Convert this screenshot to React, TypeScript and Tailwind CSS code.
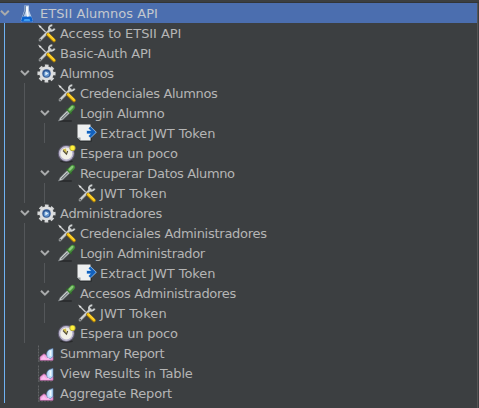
import React from "react";

type Kind = "flask" | "tools" | "gear" | "dropper" | "extract" | "timer" | "chart";
type Node = { label: string; kind: Kind; depth: number; open?: boolean; tracking: string };

const root: Node = { label: "ETSII Alumnos API", kind: "flask", depth: 0, open: true, tracking: "tracking-[0.04px]" };

const nodes: Node[] = [
  { label: "Access to ETSII API", kind: "tools", depth: 1, tracking: "tracking-[-0.07px]" },
  { label: "Basic-Auth API", kind: "tools", depth: 1, tracking: "tracking-[-0.2px]" },
  { label: "Alumnos", kind: "gear", depth: 1, open: true, tracking: "tracking-[-0.4px]" },
  { label: "Credenciales Alumnos", kind: "tools", depth: 2, tracking: "tracking-[-0.34px]" },
  { label: "Login Alumno", kind: "dropper", depth: 2, open: true, tracking: "tracking-[-0.38px]" },
  { label: "Extract JWT Token", kind: "extract", depth: 3, tracking: "tracking-[-0.06px]" },
  { label: "Espera un poco", kind: "timer", depth: 2, tracking: "tracking-[-0.2px]" },
  { label: "Recuperar Datos Alumno", kind: "dropper", depth: 2, open: true, tracking: "tracking-[-0.35px]" },
  { label: "JWT Token", kind: "tools", depth: 3, tracking: "tracking-[0.12px]" },
  { label: "Administradores", kind: "gear", depth: 1, open: true, tracking: "tracking-[-0.28px]" },
  { label: "Credenciales Administradores", kind: "tools", depth: 2, tracking: "tracking-[-0.26px]" },
  { label: "Login Administrador", kind: "dropper", depth: 2, open: true, tracking: "tracking-[-0.32px]" },
  { label: "Extract JWT Token", kind: "extract", depth: 3, tracking: "tracking-[-0.06px]" },
  { label: "Accesos Administradores", kind: "dropper", depth: 2, open: true, tracking: "tracking-[-0.3px]" },
  { label: "JWT Token", kind: "tools", depth: 3, tracking: "tracking-[0.12px]" },
  { label: "Espera un poco", kind: "timer", depth: 2, tracking: "tracking-[-0.2px]" },
  { label: "Summary Report", kind: "chart", depth: 1, tracking: "tracking-[-0.42px]" },
  { label: "View Results in Table", kind: "chart", depth: 1, tracking: "tracking-[-0.14px]" },
  { label: "Aggregate Report", kind: "chart", depth: 1, tracking: "tracking-[-0.19px]" },
];

function Glyph({ kind }: { kind: Kind }) {
  switch (kind) {
    case "flask":
      return (
        <>
          <ellipse cx="10" cy="18.2" rx="6.500" ry="1.100" fill="#30508d" />
          <path d="M7.200 2.500h4.800v5l4 10c.2.800-.2 1.300-1 1.300H4.800c-.8 0-1.200-.5-1-1.300l3.400-10z" fill="#b4cae8" />
          <path d="M5.400 13.500h8.900l1.500 4c.2.700-.1 1.200-.8 1.200H4.900c-.7 0-1-.5-.8-1.200z" fill="#0a62cf" />
          <path d="M7.500 16h5l.8 2H6.500z" fill="#3e9df2" />
          <path d="M8.200 3v5l-2 5.500" fill="none" stroke="#53719f" strokeWidth="1" />
          <path d="M10 3.500v5l1 5" fill="none" stroke="#f4f8fd" strokeWidth="2" />
        </>
      );
    case "tools":
      return (
        <>
          <path d="M2.500 3 10 10.500" stroke="#c3c5c5" strokeWidth="1.400" />
          <path d="M1 1.500 4.500 3.500 3 5z" fill="#e2e2e2" />
          <path d="M3 17 13 7" stroke="#6b6f71" strokeWidth="3.200" strokeLinecap="round" />
          <path d="M3 16.700 13.500 6.200" stroke="#cfd1d1" strokeWidth="2" strokeLinecap="round" />
          <path d="M15.300 2.200c-2.500.1-3.900 1.900-3.100 4.200.9 1.900 4.100 1.800 5.500-.8" fill="none" stroke="#cdd0d1" strokeWidth="2" />
          <circle cx="3.200" cy="16.600" r=".9" fill="#55595b" />
          <path d="m11 11.500 6 6" stroke="#997410" strokeWidth="3.600" strokeLinecap="round" />
          <path d="m11.200 11.300 5.900 5.900" stroke="#f9c713" strokeWidth="2.500" strokeLinecap="round" />
          <path d="m11.700 11 5.300 5.300" stroke="#ffe163" strokeWidth=".7" />
        </>
      );
    case "gear":
      return (
        <>
          <circle cx="9.500" cy="10.500" r="7.800" fill="none" stroke="#d5d6d7" strokeWidth="2.600" strokeDasharray="3.6 2.526" strokeDashoffset="1.8" />
          <circle cx="9.500" cy="10.500" r="7.200" fill="#dedfe0" />
          <circle cx="9.500" cy="10.500" r="4.600" fill="#8e9db8" />
          <circle cx="9.500" cy="10.500" r="3.900" fill="#2e5793" />
          <circle cx="9.500" cy="11" r="2.800" fill="#6b9bd2" />
          <path d="m8.300 8.600 3.200 1.900-3.200 1.900z" fill="#e3f0fa" />
        </>
      );
    case "dropper":
      return (
        <>
          <path d="m3 17.500 9-8M3 18h11" stroke="#2b2d2f" strokeWidth="2" strokeLinecap="round" />
          <path d="m1.500 18 1.800-3.500 7.200-7.300 2.500 2.500-7.300 7z" fill="#d5d9da" stroke="#777d80" strokeWidth=".7" />
          <path d="m4.500 15.800 6.200-6.200" stroke="#697173" strokeWidth="1.200" />
          <path d="m10 6.200 4.200 4.200" stroke="#315d2c" strokeWidth="2" strokeLinecap="round" />
          <path d="m12.800 7.200 2.900-2.900" stroke="#448f3a" strokeWidth="4.800" strokeLinecap="round" />
          <path d="m12.700 6.600 2.700-2.700" stroke="#8bc979" strokeWidth="2.300" strokeLinecap="round" />
        </>
      );
    case "extract":
      return (
        <>
          <path d="M2.500 18.200h12V14" fill="none" stroke="#292c2e" />
          <path d="M.5 1.500h13v16H3.500L.5 14.500z" fill="#eef0f0" />
          <path d="M.5 14.500h3v3z" fill="#9ba0a3" />
          <path d="M9.500 9.200h7.500M12.500 4.300 17.500 9.200l-5 5" fill="none" stroke="#9cc8f2" strokeWidth="3.200" />
          <path d="M10 9.200h7M12.500 4.500 17.200 9.200l-4.700 4.700" fill="none" stroke="#1261bd" strokeWidth="2.400" />
        </>
      );
    case "timer":
      return (
        <>
          <ellipse cx="9.500" cy="18.300" rx="6.500" ry="1.200" fill="#28292b" />
          <circle cx="9.300" cy="10.500" r="7.700" fill="#f1efe6" stroke="#5f5b70" strokeWidth="1.600" />
          <circle cx="9.300" cy="10.500" r="6.700" fill="none" stroke="#bbb5ce" strokeWidth="1.500" />
          <path d="M5.500 6.500 9 5.500l1 5.500z" fill="#d2bd4a" />
          <path d="m6 7.500 3.500 3.700 1.200-3.200" fill="none" stroke="#554e38" strokeWidth="1.100" />
          <circle cx="15.500" cy="5" r="3.100" fill="#b8ad38" />
          <circle cx="15.500" cy="5" r="2.200" fill="#fff23d" />
        </>
      );
    case "chart":
      return (
        <>
          <path d="M1.500 2.500v16M1 18h15" fill="none" stroke="#626567" strokeWidth="1" strokeDasharray="2 1" />
          <path d="M3 17.200v-3.200l4-3.200 2.500 1.700 2 2 4.500-1.500v4.200z" fill="#f1a7de" stroke="#bd64a9" strokeWidth=".7" />
          <path d="M10 13.500c-1-3.500.4-6.300 2.800-7.100l3.200-.9v8l-2.500 2-2.200-.3z" fill="#bfe1fc" stroke="#597dae" strokeWidth=".7" />
          <path d="M13.400 7.500v5.500" stroke="#f3faff" strokeWidth="1.600" />
          <path d="m3.500 16.800 3.200-4 2.500 3 2-1 2.500 2z" fill="#fbbdf0" />
        </>
      );
  }
}

function Row({ node, selected = false }: { node: Node; selected?: boolean }) {
  return (
    <div className={`flex h-5 shrink-0 items-center pl-1 ${selected ? "bg-[#4b6eaf] text-[#c4c8ce]" : "text-[#b5b5b5]"}`}>
      {Array.from({ length: node.depth }, (_, i) => (
        <span key={i} className={`h-5 w-5 shrink-0 border-l ${i === 0 ? "border-[#6fb2f2]" : "border-[#54575a]"}`} />
      ))}
      <span className="w-[13px] shrink-0">
        {node.open && (
          <svg className="-ml-1 h-[10px] w-[10px]" viewBox="0 0 10 10">
            <path d="M1 2.800 4.900 6.700 8.800 2.800" fill="none" stroke="#a9abac" strokeWidth="2" />
          </svg>
        )}
      </span>
      <svg className="h-5 w-5 shrink-0" viewBox="0 0 20 20">
        <Glyph kind={node.kind} />
      </svg>
      <span className={`ml-[3px] whitespace-nowrap pt-[2px] ${node.tracking}`}>{node.label}</span>
    </div>
  );
}

export default function App() {
  return (
    <main className="flex h-[408px] w-[479px] flex-col overflow-hidden bg-[#3c3f41] font-['DejaVu_Sans',sans-serif] text-[13px] leading-5">
      <div className="h-[3px] shrink-0 border-b border-[#323537]" />
      <div className="mr-px flex h-[405px] flex-col border-r border-[#555555]">
        <Row node={root} selected />
        {nodes.map((node, i) => <Row key={i} node={node} />)}
      </div>
    </main>
  );
}
